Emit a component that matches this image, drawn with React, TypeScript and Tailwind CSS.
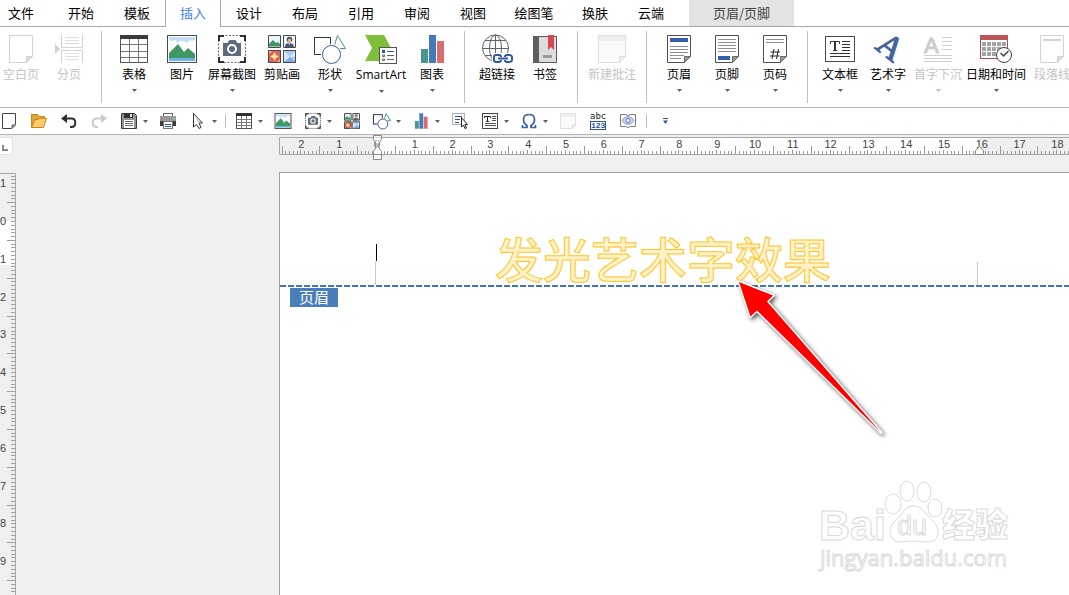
import React, { useEffect, useState } from 'react'

type IconProps = { size?: string }

const RIBBON = 'h-[30px] w-8'
const SMALL = 'h-4 w-4'
const LINE = '#a6a6a6'

const Svg: React.FC<{ className?: string; box?: string; children: React.ReactNode }> = ({
  className = RIBBON,
  box,
  children,
}) => {
  // ribbon drawings reused in the quick bar are cropped tighter and get heavier lines
  const shrunk = className === SMALL && !box
  return (
    <svg
      className={`block shrink-0 overflow-visible ${className}`}
      viewBox={box ?? (shrunk ? '1.500 1 29 28' : '0 0 32 30')}
      strokeWidth={shrunk ? 1.8 : 1}
      fill="none"
      aria-hidden="true"
    >
      {children}
    </svg>
  )
}

const Caret: React.FC<{ className?: string; color?: string }> = ({ className = '', color = '#5f5f5f' }) => (
  <svg className={`block h-[3px] w-[5px] shrink-0 ${className}`} viewBox="0 0 5 3" aria-hidden="true">
    <path d="M0 0h5L2.5 3z" fill={color} />
  </svg>
)

/* Ribbon icons */

const BlankPageIcon = () => (
  <Svg>
    <path d="M4.5 1.5h23v21l-6 6h-17z" stroke="#d2d2d2" />
    <path d="M21.5 28.5v-6h6z" fill="#dcdcdc" stroke="#d2d2d2" />
  </Svg>
)

const BreakIcon = () => (
  <Svg>
    <path d="M8.5 1v12.5h21V1M8.5 29V16.5h21V29" stroke="#d2d2d2" />
    <path d="M12 3.5h14M12 6.5h14M12 9.5h14M12 19.5h14M12 22.5h14M12 25.5h14" stroke="#dedede" />
    <path d="M2 10l5 5-5 5z" fill="#d2d2d2" />
  </Svg>
)

const TableIcon = () => (
  <Svg>
    <rect x="2.5" y="1.5" width="27" height="27" stroke="#555" fill="#fff" />
    <path d="M11.5 5v23M20.5 5v23M3 10.5h26M3 17.5h26M3 23.5h26" stroke="#777" />
    <path d="M2 1h28v4H2z" fill="#3a3a3a" />
  </Svg>
)

const PictureIcon: React.FC<IconProps> = ({ size = RIBBON }) => (
  <Svg className={size}>
    <rect x="1.5" y="1.5" width="29" height="27" stroke="#4a4a4a" fill="#fff" />
    <path d="M3 3h26v3l-3 1-2-1-3 3-3-2-4 0-2 2-3-3-3 1-3-1z" fill="#c3def4" />
    <path d="M3 24v-5l9-9 6 8 4-4 7 6v4z" fill="#3f9863" />
    <path d="M3 24h26v3H3z" fill="#6fb3e6" />
  </Svg>
)

const CameraIcon: React.FC<IconProps> = ({ size = RIBBON }) => (
  <Svg className={size}>
    <rect x="2.5" y="1.5" width="27" height="27" stroke="#6a6a6a" strokeDasharray="2 1.5" />
    <path d="M3 7V2h5M24 2h5v5M29 23v5h-5M8 28H3v-5" stroke="#2e2e2e" strokeWidth="2" />
    <path d="M7 9h4.5l2-3h6l2 3H25v13H7z" fill="#5d6b7c" />
    <circle cx="16" cy="15" r="4" stroke="#fff" strokeWidth="2" />
  </Svg>
)

const ClipArtIcon: React.FC<IconProps> = ({ size = RIBBON }) => (
  <Svg className={size}>
    <path d="M2.5 1.5h12v12h-12zM17.5 1.5h12v12h-12z" fill="#eaf5fb" stroke="#4a4a4a" />
    <path d="M3 12.5V10l4-4 3 3 2-1 2 2v2.5z" fill="#3f9863" />
    <path d="M19 13c0-3 1.5-4 4-4s5 1 5 4z" fill="#41597c" />
    <circle cx="23.5" cy="5.5" r="2.8" fill="#555" />
    <path d="M22 5h3v4l-1.5 2L22 9z" fill="#dcb58e" />
    <rect x="2.5" y="16.5" width="12" height="12" fill="#dc6265" stroke="#4a4a4a" />
    <path d="M8.5 18l1.5 3 3 1.5-3 1.5-1.5 3L7 24l-3-1.5L7 21z" fill="#ffe78c" />
    <path d="M3 17h3l-3 3zM14 28h-3l3-3z" fill="#f6bb6b" />
    <rect x="17.5" y="16.5" width="12" height="12" fill="#a9c9f5" stroke="#4a4a4a" />
    <path d="M18 28V17l6 6zM29 17v6l-5 0z" fill="#dce9fb" />
    <path d="M18 28l6-5 5 5z" fill="#7fa8e6" />
  </Svg>
)

const ShapesIcon: React.FC<IconProps> = ({ size = RIBBON }) => (
  <Svg className={size}>
    <path d="M23.5 1.5l8 13h-12z" stroke="#4a9390" />
    <rect x=".5" y="3.5" width="16" height="17" fill="#fff" stroke="#26365c" />
    <circle cx="17.5" cy="20.5" r="10.500" fill="#fff" />
    <circle cx="17.5" cy="20.5" r="9" fill="#fff" stroke="#3b61a0" />
  </Svg>
)

const SmartArtIcon = () => (
  <Svg>
    <path d="M0 1h19l7 13-7 13H0l7-13z" fill="#7fbe3b" />
    <rect x="14.5" y="13.5" width="17" height="16" fill="#fff" stroke="#555" />
    <path d="M17 16h3v3h-3z" fill="#2c5598" />
    <path d="M17.5 21h2v1.5h-2zM17.5 25h2v1.5h-2z" stroke="#666" />
    <path d="M22 17.5h7" stroke="#2c5598" />
    <path d="M22 21.5h7M22 25.5h7" stroke="#666" />
  </Svg>
)

const ChartIcon: React.FC<IconProps> = ({ size = RIBBON }) => (
  <Svg className={size}>
    <path d="M5 15h7v14H5z" fill="#46958f" />
    <path d="M13 1h7v28h-7z" fill="#4379bd" />
    <path d="M21 7h7v22h-7z" fill="#d86d70" />
  </Svg>
)

const LinkIcon = () => (
  <Svg>
    <g stroke="#5c6670">
      <circle cx="14.5" cy="14" r="13" />
      <ellipse cx="14.5" cy="14" rx="6" ry="13" />
      <path d="M14.5 1v26M1.5 14.500h26M4 6.5h21M4 21.5h21" />
    </g>
    <path d="M11 19h21v10H11z" fill="#fff" />
    <g stroke="#2f57a3" strokeWidth="2">
      <path d="M20 23c0-1-.5-2-2-2h-3c-1.500 0-2 1-2 2v3c0 1 .5 2 2 2h3c1.500 0 2-1 2-2M24 23c0-1 .5-2 2-2h2c1.500 0 3 1 3 2v3c0 1-1.500 2-3 2h-2c-1.500 0-2-1-2-2" />
      <path d="M17 24.5h10" />
    </g>
  </Svg>
)

const BookmarkIcon = () => (
  <Svg>
    <rect x="4.5" y="2.5" width="23" height="26" fill="#dcdcdc" stroke="#5a5a5a" />
    <path d="M4 2h6v27H4z" fill="#5f5f5f" />
    <path d="M19 1h6v15l-3-3-3 3z" fill="#d14a4f" />
    <path d="M14 21h9v3h-9z" fill="#999" />
  </Svg>
)

const CommentIcon: React.FC<IconProps> = ({ size = RIBBON }) => (
  <Svg className={size}>
    <path d="M2.5 1.5h27v21l-6 6h-21z" fill="#fafafa" stroke="#dedede" />
    <path d="M3 2h26v5H3z" fill="#eee" />
    <path d="M23.5 28.5v-6h6z" fill="#eee" stroke="#dedede" />
  </Svg>
)

const Sheet: React.FC<{ children: React.ReactNode }> = ({ children }) => (
  <Svg>
    <path d="M4.5 1.5h23v21l-6 6h-17z" fill="#fff" stroke="#4f4f4f" />
    {children}
    <path d="M21.5 28.5v-6h6z" fill="#9a9a9a" stroke="#6a6a6a" />
  </Svg>
)

const HeaderIcon = () => (
  <Sheet>
    <path d="M7 4h18v4H7z" fill="#355fa8" />
    <path d="M7 12.5h18M7 15.5h18M7 18.5h18M7 21.5h14M7 24.5h11" stroke="#8f8f8f" />
  </Sheet>
)

const FooterIcon = () => (
  <Sheet>
    <path d="M7 5.5h18M7 8.5h18M7 11.5h18M7 14.5h18M7 17.5h18" stroke="#8f8f8f" />
    <path d="M7 22h12v4H7z" fill="#355fa8" />
  </Sheet>
)

const PageNumberIcon = () => (
  <Sheet>
    <path d="M7 5.5h18M7 8.5h18" stroke="#8f8f8f" />
    <path d="M15 15l-2 10M19.5 15l-2 10M11.5 18h9.5M11 22h9.5" stroke="#222" />
  </Sheet>
)

const TextBoxIcon = () => (
  <Svg>
    <rect x="1.5" y="2.5" width="29" height="25" fill="#fff" stroke="#4a4a4a" />
    <path d="M6.500 10V7.500h9V10M9 16.500h4" stroke="#333" />
    <path d="M11 7v10" stroke="#333" strokeWidth="2" />
    <path d="M18 7.5h8M18 10.5h8M18 13.5h8M18 16.5h8M6 19.5h20M6 22.5h20" stroke="#333" />
  </Svg>
)

const WordArtIcon = () => (
  <Svg>
    <text
      fill="#44639b"
      stroke="#44639b"
      transform="translate(2 14) rotate(38)"
      className="font-['Liberation_Serif',serif] text-[34px]"
    >
      A
    </text>
  </Svg>
)

const DropCapIcon = () => (
  <Svg>
    <text y="19" x="2" fill="#cbcbcb" stroke="#cbcbcb" className="font-['Liberation_Sans',sans-serif] text-[22px]">
      A
    </text>
    <path d="M20 3.5h10M20 7.5h10M20 11.5h10M20 15.5h10M2 21.5h28M2 24.5h28M2 27.5h28" stroke="#cfcfcf" />
  </Svg>
)

const DateIcon = () => (
  <Svg>
    <rect x=".5" y="1.5" width="27" height="23" fill="#fff" stroke="#b04a4b" />
    <path d="M0 1h28v5H0z" fill="#b95557" />
    <path d="M2 10h24M2 15h24M2 20h24" stroke="#a3a3a3" strokeWidth="4" strokeDasharray="4 1" />
    <circle cx="24" cy="21" r="7.5" fill="#fff" stroke="#444" />
    <path d="M20.5 19l3 3 5-5" stroke="#444" strokeWidth="1.5" />
  </Svg>
)

const ParagraphIcon = () => (
  <Svg>
    <path d="M4.5 1.5h23v21l-6 6h-17z" stroke="#d2d2d2" />
    <path d="M7 5h18v2H7z" fill="#d2d2d2" />
    <path d="M21.5 28.5v-6h6z" fill="#dcdcdc" stroke="#d2d2d2" />
  </Svg>
)

/* Quick access icons */

const Small: React.FC<{ children: React.ReactNode }> = ({ children }) => (
  <Svg className={SMALL} box="0 0 16 16">
    {children}
  </Svg>
)

const NewIcon = () => (
  <Small>
    <path d="M1.5 .5h13v11l-4 4h-9z" fill="#fff" stroke="#444" />
    <path d="M11 15.5V12h3.5z" fill="#999" stroke="#666" />
  </Small>
)

const OpenIcon = () => (
  <Small>
    <path d="M.5 14.5v-13h6l2 2h5v3" fill="#e2a336" stroke="#c98515" />
    <path d="M.5 14.5l3.500-8h3l1.5-1h7L12.5 14.5z" fill="#fccb6b" stroke="#c98515" />
  </Small>
)

const UndoIcon: React.FC<{ color?: string; flip?: boolean }> = ({ color = '#2f2f2f', flip }) => (
  <Small>
    <g transform={flip ? 'matrix(-1 0 0 1 16 0)' : undefined}>
      <path d="M4 5.5h6.5c5 0 5 8.500 0 8.500H9" stroke={color} strokeWidth="2" />
      <path d="M0 5.5L6 1v9z" fill={color} />
    </g>
  </Small>
)

const SaveIcon = () => (
  <Small>
    <path d="M.5 .5h13l2 2v13H.5z" fill="#929292" stroke="#3a3a3a" />
    <path d="M3 0h9v5H3z" fill="#333" />
    <path d="M9 1h2v3H9z" fill="#ddd" />
    <path d="M3 7h10v8H3z" fill="#fff" />
    <path d="M4 8.5h8M4 10.5h8M4 12.5h8" stroke="#666" />
  </Small>
)

const PrintIcon = () => (
  <Small>
    <rect x="3.5" y=".5" width="9" height="4" fill="#fff" stroke="#666" />
    <path d="M0 3h16v9H0z" fill="#999" />
    <path d="M0 8h16v5H0z" fill="#3d3d3d" />
    <path d="M13 5h2v1h-2z" fill="#3de0e8" />
    <rect x="3.5" y="8.5" width="9" height="7" fill="#fff" stroke="#777" />
    <path d="M5 11.5h6M5 13.5h6" stroke="#2b55a0" />
  </Small>
)

const PointerIcon = () => (
  <Small>
    <path d="M3.5 .5v13.500l3-2.500 2.5 4 2-1-2-4.500h3.500z" fill="#fff" stroke="#333" />
    <path d="M5 4l5 5H8z" fill="#bbb" />
  </Small>
)

const SmallTableIcon = () => (
  <Small>
    <rect x=".5" y=".5" width="15" height="15" fill="#fff" stroke="#555" />
    <path d="M5.5 3v12M10.5 3v12M1 6.5h14M1 9.5h14M1 12.5h14" stroke="#777" />
    <path d="M0 0h16v3H0z" fill="#333" />
  </Small>
)

const SelectIcon = () => (
  <Small>
    <rect x=".5" y=".5" width="12" height="11" stroke="#4a6590" strokeDasharray="1 1" />
    <path d="M3 3.5h7M3 6.5h5M3 9.5h4" stroke="#2b55a0" />
    <path d="M9.5 4.5v9.5l2-2 1.5 3.5 1.5-.5-1.5-3.5h2.5z" fill="#fff" stroke="#222" />
  </Small>
)

const SmallTextIcon = () => (
  <Small>
    <rect x=".5" y=".5" width="15" height="15" fill="#fff" stroke="#444" />
    <path d="M2.500 5V3.500h6V5M5.500 3v5M4 8.500h3" stroke="#222" />
    <path d="M10 3.5h4M10 5.5h4M10 7.5h4M3 10.5h11M3 12.5h11" stroke="#555" />
  </Small>
)

const OmegaIcon = () => (
  <Small>
    <path
      d="M1.5 12v2.5h4.5v-2C3.5 11 2.5 9 2.5 6.5c0-3 2-5 5.5-5s5.500 2 5.500 5c0 2.500-1 4.500-3.500 6v2h4.500V12"
      stroke="#3f5f99"
      strokeWidth="1.7"
    />
  </Small>
)

const AbcIcon = () => (
  <Svg className="h-[18px] w-4" box="0 0 16 18">
    <text x="0" y="7" fill="#222" className="font-['DejaVu_Sans_Mono',monospace] text-[9px]">
      abc
    </text>
    <rect x=".5" y="9.5" width="15" height="8" fill="#fff" stroke="#2b55a0" />
    <text x="1" y="16" fill="#2b55a0" className="font-['Liberation_Mono',monospace] text-[8px] font-bold">
      123
    </text>
  </Svg>
)

const EyeIcon = () => (
  <Small>
    <path d="M.5 1.5h5l2.5 1 2.5-1h5v12h-5l-2.5 1-2.5-1h-5z" fill="#fff" stroke="#777" />
    <path d="M2 7.5c3-5 9-5 12 0-3 5-9 5-12 0z" fill="#cdd5ef" stroke="#8796c8" />
    <circle cx="8" cy="7.5" r="2" fill="#fff" stroke="#5d71b5" />
  </Small>
)

/* Ribbon */

const tabs = ['开始', '模板', '插入', '设计', '布局', '引用', '审阅', '视图', '绘图笔', '换肤', '云端']

const TabBar = () => (
  <nav className="flex h-[27px] text-[13px] leading-[26px] text-black">
    <button className="w-[53px] border-b border-[#a9a9a9] pl-2 text-left">文件</button>
    {tabs.map((tab) =>
      tab === '插入' ? (
        <button key={tab} aria-current="page" className="w-14 border-x border-[#a9a9a9] pb-px text-[#3c7ff0]">
          {tab}
        </button>
      ) : (
        <button key={tab} className={`border-b border-[#a9a9a9] ${tab.length > 2 ? 'w-[66px]' : 'w-14'}`}>
          {tab}
        </button>
      ),
    )}
    <div className="w-[10px] border-b border-[#a9a9a9]" />
    <button className="w-[105px] border-b border-[#a9a9a9] bg-[#e3e3e3] text-[#444]">页眉/页脚</button>
    <div className="flex-1 border-b border-[#a9a9a9]" />
  </nav>
)

interface RibbonItem {
  label: string
  icon: React.FC<IconProps>
  width?: string
  menu?: boolean
  disabled?: boolean
}

const ribbonGroups: RibbonItem[][] = [
  [
    { label: '空白页', icon: BlankPageIcon, width: 'w-[42px] mr-[3px]', disabled: true },
    { label: '分页', icon: BreakIcon, disabled: true },
  ],
  [
    { label: '表格', icon: TableIcon, menu: true },
    { label: '图片', icon: PictureIcon },
    { label: '屏幕截图', icon: CameraIcon, width: 'w-[52px]', menu: true },
    { label: '剪贴画', icon: ClipArtIcon },
    { label: '形状', icon: ShapesIcon, menu: true },
    { label: 'SmartArt', icon: SmartArtIcon, width: 'w-[54px]', menu: true },
    { label: '图表', icon: ChartIcon, menu: true },
  ],
  [
    { label: '超链接', icon: LinkIcon },
    { label: '书签', icon: BookmarkIcon },
  ],
  [{ label: '新建批注', icon: CommentIcon, width: 'w-[52px]', disabled: true }],
  [
    { label: '页眉', icon: HeaderIcon, menu: true },
    { label: '页脚', icon: FooterIcon, menu: true },
    { label: '页码', icon: PageNumberIcon, menu: true },
  ],
  [
    { label: '文本框', icon: TextBoxIcon, menu: true },
    { label: '艺术字', icon: WordArtIcon, menu: true },
    { label: '首字下沉', icon: DropCapIcon, width: 'w-[52px]', menu: true, disabled: true },
    { label: '日期和时间', icon: DateIcon, width: 'w-16', menu: true },
    { label: '段落线', icon: ParagraphIcon, disabled: true },
  ],
]

const RibbonButton: React.FC<RibbonItem> = ({ label, icon: Icon, width = 'w-12', menu, disabled }) => (
  <button
    disabled={disabled}
    className={`flex shrink-0 flex-col items-center text-xs leading-4 whitespace-nowrap ${width} ${
      disabled ? 'text-[#c4c4c4]' : 'text-black'
    }`}
  >
    <Icon />
    <span className={label === 'SmartArt' ? "mt-[3px] font-['Open_Sans','Noto_Sans_CJK_SC',sans-serif]" : 'mt-[2px]'}>
      {label}
    </span>
    {menu && <Caret className="mt-[7px]" color={disabled ? '#bdbdbd' : '#5f5f5f'} />}
  </button>
)

const Ribbon = () => (
  <div className="flex h-[81px] overflow-hidden border-b border-[#b4b4b4] pt-1">
    {ribbonGroups.map((group, i) => (
      <React.Fragment key={group[0].label}>
        {i > 0 && <div className="h-[72px] w-px shrink-0 bg-[#c0c0c0]" />}
        <div className={`flex shrink-0 pt-[3px] pr-2 ${i > 0 ? 'pl-2' : ''}`}>
          {group.map((item) => (
            <RibbonButton key={item.label} {...item} />
          ))}
        </div>
      </React.Fragment>
    ))}
  </div>
)

const quickItems: { label: string; icon: React.ReactNode; menu?: boolean; divider?: boolean }[] = [
  { label: '新建', icon: <NewIcon /> },
  { label: '打开', icon: <OpenIcon /> },
  { label: '撤销', icon: <UndoIcon /> },
  { label: '恢复', icon: <UndoIcon color="#cacaca" flip /> },
  { label: '保存', icon: <SaveIcon />, menu: true },
  { label: '打印', icon: <PrintIcon /> },
  { label: '选择', icon: <PointerIcon />, menu: true, divider: true },
  { label: '表格', icon: <SmallTableIcon />, menu: true },
  { label: '图片', icon: <PictureIcon size={SMALL} /> },
  { label: '屏幕截图', icon: <CameraIcon size={SMALL} />, menu: true },
  { label: '剪贴画', icon: <ClipArtIcon size={SMALL} /> },
  { label: '形状', icon: <ShapesIcon size={SMALL} />, menu: true },
  { label: '图表', icon: <ChartIcon size={SMALL} />, menu: true },
  { label: '选择对象', icon: <SelectIcon /> },
  { label: '文本框', icon: <SmallTextIcon />, menu: true },
  { label: '符号', icon: <OmegaIcon />, menu: true },
  { label: '批注', icon: <CommentIcon size={SMALL} /> },
  { label: '字数统计', icon: <AbcIcon /> },
  { label: '阅读', icon: <EyeIcon />, divider: true },
]

const QuickBar = () => (
  <div className="flex h-[27px] items-center border-b border-[#b4b4b4] pl-px">
    {quickItems.map(({ label, icon, menu, divider }) => (
      <React.Fragment key={label}>
        <button aria-label={label} className={`flex shrink-0 items-center ${menu ? 'mr-3' : 'mr-[14px]'}`}>
          {icon}
          {menu && <Caret className="ml-[6px]" />}
        </button>
        {divider && <div className="mr-[10px] -ml-1 h-[14px] w-px shrink-0 bg-[#c0c0c0]" />}
      </React.Fragment>
    ))}
    <button aria-label="更多" className="ml-[5px]">
      <svg className="block h-[6px] w-[7px]" viewBox="0 0 7 6" aria-hidden="true">
        <path d="M1 .5h5" stroke="#2b55a0" />
        <path d="M1 2.5h5L3.5 6z" fill="#2b55a0" />
      </svg>
    </button>
  </div>
)

/* Rulers: ten ticks to the centimetre, the long one at each half */

const CM = 37.8

const range = (from: number, to: number) => Array.from({ length: to - from + 1 }, (_, i) => from + i)
const tickLength = (i: number) => (i % 10 === 0 ? 4 : i % 5 === 0 ? 8 : 3)
const tickAt = (origin: number, i: number) => Math.round(origin + (i * CM) / 10) + 0.5

const useWindowSize = () => {
  const [size, setSize] = useState({ width: window.innerWidth, height: window.innerHeight })
  useEffect(() => {
    const onResize = () => setSize({ width: window.innerWidth, height: window.innerHeight })
    window.addEventListener('resize', onResize)
    return () => window.removeEventListener('resize', onResize)
  }, [])
  return size
}

const RULER_TEXT = "font-['Liberation_Sans',sans-serif] text-[11px]"

const HorizontalRuler = () => {
  const { width } = useWindowSize()
  const last = Math.floor((width - 385) / CM)

  return (
    <svg className="block h-[25px] min-w-0 flex-1" aria-hidden="true">
      <rect x="98" y="3" width="602" height="16" fill="#fff" />
      <path d="M4000 2.5H.5v17H4000" fill="none" stroke={LINE} />
      <path
        d={range(-25, last * 10 + 10).map((i) => `M${tickAt(97, i)} 19v-${tickLength(i)}`).join('')}
        stroke="#9b9b9b"
      />
      {range(-2, last).map((n) => (
        <text key={n} x={98 + n * CM} y="13" textAnchor="middle" fill="#444" className={RULER_TEXT}>
          {Math.abs(n)}
        </text>
      ))}
      <g fill="#fff" stroke="#8a8a8a">
        <path d="M94.5 .5h8v4l-4 6-4-6z" fillOpacity=".6" />
        <path d="M94.5 19.5v-3l4-6 4 6v3zM94.5 19.5h8v5h-8z" />
        <path d="M696.5 19.5v-4l4-4 4 4v4z" />
      </g>
    </svg>
  )
}

const VerticalRuler = () => {
  const { height } = useWindowSize()
  const last = Math.floor((height - 226) / CM)

  return (
    <svg className="mt-px block w-4 shrink-0 self-stretch" aria-hidden="true">
      <rect y="48" width="15" height="44" fill="#fff" />
      <path d="M0 .5h15.5V3000" fill="none" stroke={LINE} />
      <path
        d={range(-12, last * 10 + 10)
          .map((i) => `M15 ${tickAt(48, i)}h-${i % 10 !== 0 && i % 5 === 0 ? 8 : 4}`)
          .join('')}
        stroke="#a0a0a0"
      />
      {range(-1, last).map((n) => (
        <text key={n} x="3" y={52 + n * CM} textAnchor="middle" fill="#444" className={RULER_TEXT}>
          {Math.abs(n)}
        </text>
      ))}
    </svg>
  )
}

/* Page */

const Arrow = () => (
  <svg className="absolute top-[100px] left-[450px] h-[175px] w-[170px]" viewBox="0 0 170 175" aria-hidden="true">
    <path
      d="M9 9l34 13.500-6 6L151 159.500 27 37.500l-6.500 6z"
      fill="#f00"
      stroke="#fff"
      strokeWidth="3"
      strokeLinejoin="round"
      paintOrder="stroke"
      className="drop-shadow-[2px_2px_2px_rgba(0,0,0,0.65)]"
    />
  </svg>
)

const Watermark = () => (
  <svg
    className="absolute top-[302px] left-[535px] h-[105px] w-[205px]"
    viewBox="0 0 205 105"
    fill="#fff"
    stroke="#d9d9d9"
    strokeLinejoin="round"
    aria-hidden="true"
  >
    <text x="4" y="65" className="font-['Liberation_Sans',sans-serif] text-[43px] font-bold">
      Bai
    </text>
    <ellipse cx="78" cy="29" rx="8" ry="10" />
    <ellipse cx="92" cy="16" rx="7" ry="10" />
    <ellipse cx="109" cy="17" rx="7" ry="10" />
    <ellipse cx="120" cy="33" rx="7" ry="9" />
    <path d="M98 31c7 0 10 4 14 9 6 6 11 10 11 17 0 8-6 10-12 10-5 0-8-1-13-1s-9 1-13 1c-6 0-10-4-10-11 0-6 5-10 10-15 4-5 6-10 13-10z" />
    <text x="82" y="60" className="font-['Liberation_Sans',sans-serif] text-[27px]">
      du
    </text>
    <text x="127" y="62" className="font-['Noto_Sans_CJK_SC',sans-serif] text-[33px] font-black">
      经验
    </text>
    <text x="5" y="91" className="font-['Open_Sans',sans-serif] text-[22px]">
      jingyan.baidu.com
    </text>
  </svg>
)

const Page = () => (
  <article className="relative min-w-0 flex-1 overflow-hidden border-t border-l border-[#a0a0a0] bg-white">
    <header className="flex h-[112px] items-end">
      <div className="ml-[95px] flex flex-col">
        <span className="ml-px h-[17px] w-px bg-black" />
        <span className="mt-px h-[23px] w-px bg-[#c8c8c8]" />
      </div>
      <h1 className="flex w-[600px] shrink-0 justify-center pr-7 font-['Noto_Sans_CJK_SC',sans-serif] text-[48px] leading-[56px] font-medium whitespace-nowrap text-[#fff2cc] [-webkit-text-stroke:1px_#ffc61a]">
        发光艺术字效果
      </h1>
      <span className="h-[23px] w-px shrink-0 bg-[#c8c8c8]" />
    </header>
    <div className="h-[2px] bg-[repeating-linear-gradient(90deg,#4475b4_0_6px,transparent_6px_8px)]" />
    <div className="mt-px ml-[10px] h-[19px] w-12 bg-[#4a7ebb] text-center text-[15px] leading-[18px] text-white">
      页眉
    </div>
    <Arrow />
    <Watermark />
  </article>
)

export default function App() {
  return (
    <div className="flex h-screen flex-col overflow-hidden bg-white font-['Noto_Sans_CJK_SC',sans-serif]">
      <TabBar />
      <Ribbon />
      <QuickBar />
      <main className="flex min-h-0 flex-1 flex-col bg-[#efefef]">
        <div className="flex h-[37px] shrink-0">
          <div className="w-[279px] shrink-0 pt-[2px]">
            <button
              aria-label="制表符"
              className="flex h-[18px] w-[13px] items-end border border-l-0 border-[#e2e2e2] bg-white pb-[3px] pl-[2px]"
            >
              <span className="h-[6px] w-[6px] border-b-2 border-l-2 border-[#8a8a8a]" />
            </button>
          </div>
          <HorizontalRuler />
        </div>
        <div className="flex min-h-0 flex-1">
          <div className="flex w-[279px] shrink-0">
            <VerticalRuler />
          </div>
          <Page />
        </div>
      </main>
    </div>
  )
}
